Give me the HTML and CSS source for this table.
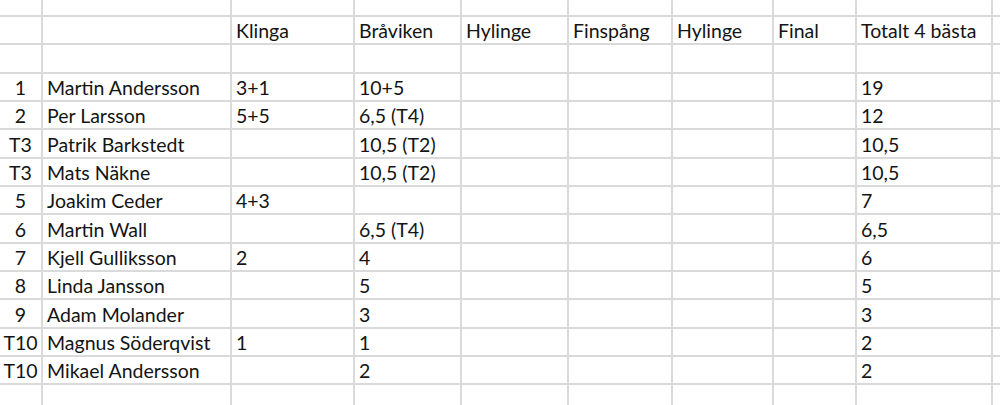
FILE: index.html
```html
<!DOCTYPE html>
<html lang="sv">
<head>
<meta charset="utf-8">
<title>Resultat</title>
<link rel="stylesheet" href="styles.css">
</head>
<body>
<div class="sheet">
  <div class="row row-top"><div class="c rank"></div><div class="c"></div><div class="c"></div><div class="c"></div><div class="c"></div><div class="c"></div><div class="c"></div><div class="c"></div><div class="c"></div><div class="c"></div></div>
  <div class="row"><div class="c rank"></div><div class="c"></div><div class="c">Klinga</div><div class="c">Bråviken</div><div class="c">Hylinge</div><div class="c">Finspång</div><div class="c">Hylinge</div><div class="c">Final</div><div class="c">Totalt 4 bästa</div><div class="c"></div></div>
  <div class="row"><div class="c rank"></div><div class="c"></div><div class="c"></div><div class="c"></div><div class="c"></div><div class="c"></div><div class="c"></div><div class="c"></div><div class="c"></div><div class="c"></div></div>
  <div class="row"><div class="c rank">1</div><div class="c">Martin Andersson</div><div class="c">3+1</div><div class="c">10+5</div><div class="c"></div><div class="c"></div><div class="c"></div><div class="c"></div><div class="c">19</div><div class="c"></div></div>
  <div class="row"><div class="c rank">2</div><div class="c">Per Larsson</div><div class="c">5+5</div><div class="c">6,5 (T4)</div><div class="c"></div><div class="c"></div><div class="c"></div><div class="c"></div><div class="c">12</div><div class="c"></div></div>
  <div class="row"><div class="c rank">T3</div><div class="c">Patrik Barkstedt</div><div class="c"></div><div class="c">10,5 (T2)</div><div class="c"></div><div class="c"></div><div class="c"></div><div class="c"></div><div class="c">10,5</div><div class="c"></div></div>
  <div class="row"><div class="c rank">T3</div><div class="c">Mats Näkne</div><div class="c"></div><div class="c">10,5 (T2)</div><div class="c"></div><div class="c"></div><div class="c"></div><div class="c"></div><div class="c">10,5</div><div class="c"></div></div>
  <div class="row"><div class="c rank">5</div><div class="c">Joakim Ceder</div><div class="c">4+3</div><div class="c"></div><div class="c"></div><div class="c"></div><div class="c"></div><div class="c"></div><div class="c">7</div><div class="c"></div></div>
  <div class="row"><div class="c rank">6</div><div class="c">Martin Wall</div><div class="c"></div><div class="c">6,5 (T4)</div><div class="c"></div><div class="c"></div><div class="c"></div><div class="c"></div><div class="c">6,5</div><div class="c"></div></div>
  <div class="row"><div class="c rank">7</div><div class="c">Kjell Gulliksson</div><div class="c">2</div><div class="c">4</div><div class="c"></div><div class="c"></div><div class="c"></div><div class="c"></div><div class="c">6</div><div class="c"></div></div>
  <div class="row"><div class="c rank">8</div><div class="c">Linda Jansson</div><div class="c"></div><div class="c">5</div><div class="c"></div><div class="c"></div><div class="c"></div><div class="c"></div><div class="c">5</div><div class="c"></div></div>
  <div class="row"><div class="c rank">9</div><div class="c">Adam Molander</div><div class="c"></div><div class="c">3</div><div class="c"></div><div class="c"></div><div class="c"></div><div class="c"></div><div class="c">3</div><div class="c"></div></div>
  <div class="row"><div class="c rank">T10</div><div class="c">Magnus Söderqvist</div><div class="c">1</div><div class="c">1</div><div class="c"></div><div class="c"></div><div class="c"></div><div class="c"></div><div class="c">2</div><div class="c"></div></div>
  <div class="row"><div class="c rank">T10</div><div class="c">Mikael Andersson</div><div class="c"></div><div class="c">2</div><div class="c"></div><div class="c"></div><div class="c"></div><div class="c"></div><div class="c">2</div><div class="c"></div></div>
  <div class="row"><div class="c rank"></div><div class="c"></div><div class="c"></div><div class="c"></div><div class="c"></div><div class="c"></div><div class="c"></div><div class="c"></div><div class="c"></div><div class="c"></div></div>
</div>
</body>
</html>
```
FILE: styles.css
```css
html, body {
  margin: 0;
  padding: 0;
  background: #ffffff;
}
body {
  width: 1000px;
  height: 405px;
  overflow: hidden;
  font-family: Lato, "Liberation Sans", sans-serif;
  font-size: 19.5px;
  color: #141414;
}
.sheet {
  display: flex;
  flex-direction: column;
}
.row {
  display: grid;
  grid-template-columns: 43px 189px 123px 107px 107px 104px 101px 83px 136px 20px;
  height: 28.33px;
}
.row-top {
  height: 17px;
}
.c {
  box-sizing: border-box;
  border-right: 2px solid #dadada;
  border-bottom: 2px solid #dadada;
  padding: 0 0 1px 4px;
  display: flex;
  align-items: flex-end;
  white-space: nowrap;
  overflow: hidden;
  line-height: 22px;
}
.rank {
  justify-content: center;
  padding-left: 0;
}
```
